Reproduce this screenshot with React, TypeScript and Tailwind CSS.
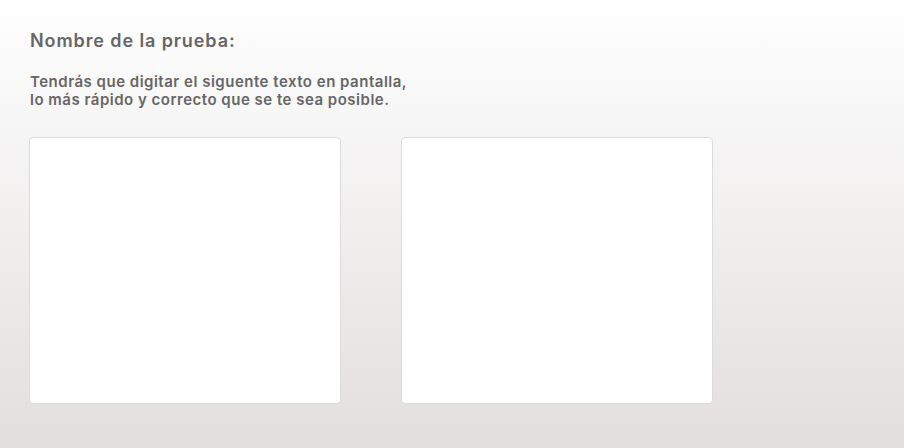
import React from "react";

export default function App() {
  return (
    <div className="w-[904px] h-[448px] overflow-hidden bg-gradient-to-b from-white to-[#e2dfde] px-[30px] pt-[28px] [font-family:Inter,sans-serif] text-[#666666]">
      <h1 className="text-[18px] leading-[26px] font-semibold tracking-[0.9px]">Nombre de la prueba:</h1>
      <p className="mt-[19px] text-[15px] leading-[18px] font-semibold tracking-[0.5px]">
        Tendrás que digitar el siguente texto en pantalla,
        <br />
        lo más rápido y correcto que se te sea posible.
      </p>
      <div className="mt-[28px] -ml-px flex gap-[60px]">
        <div className="w-[312px] h-[267px] rounded-[4px] border border-[#dcdcdc] bg-white" />
        <div className="w-[312px] h-[267px] rounded-[4px] border border-[#dcdcdc] bg-white" />
      </div>
    </div>
  );
}
